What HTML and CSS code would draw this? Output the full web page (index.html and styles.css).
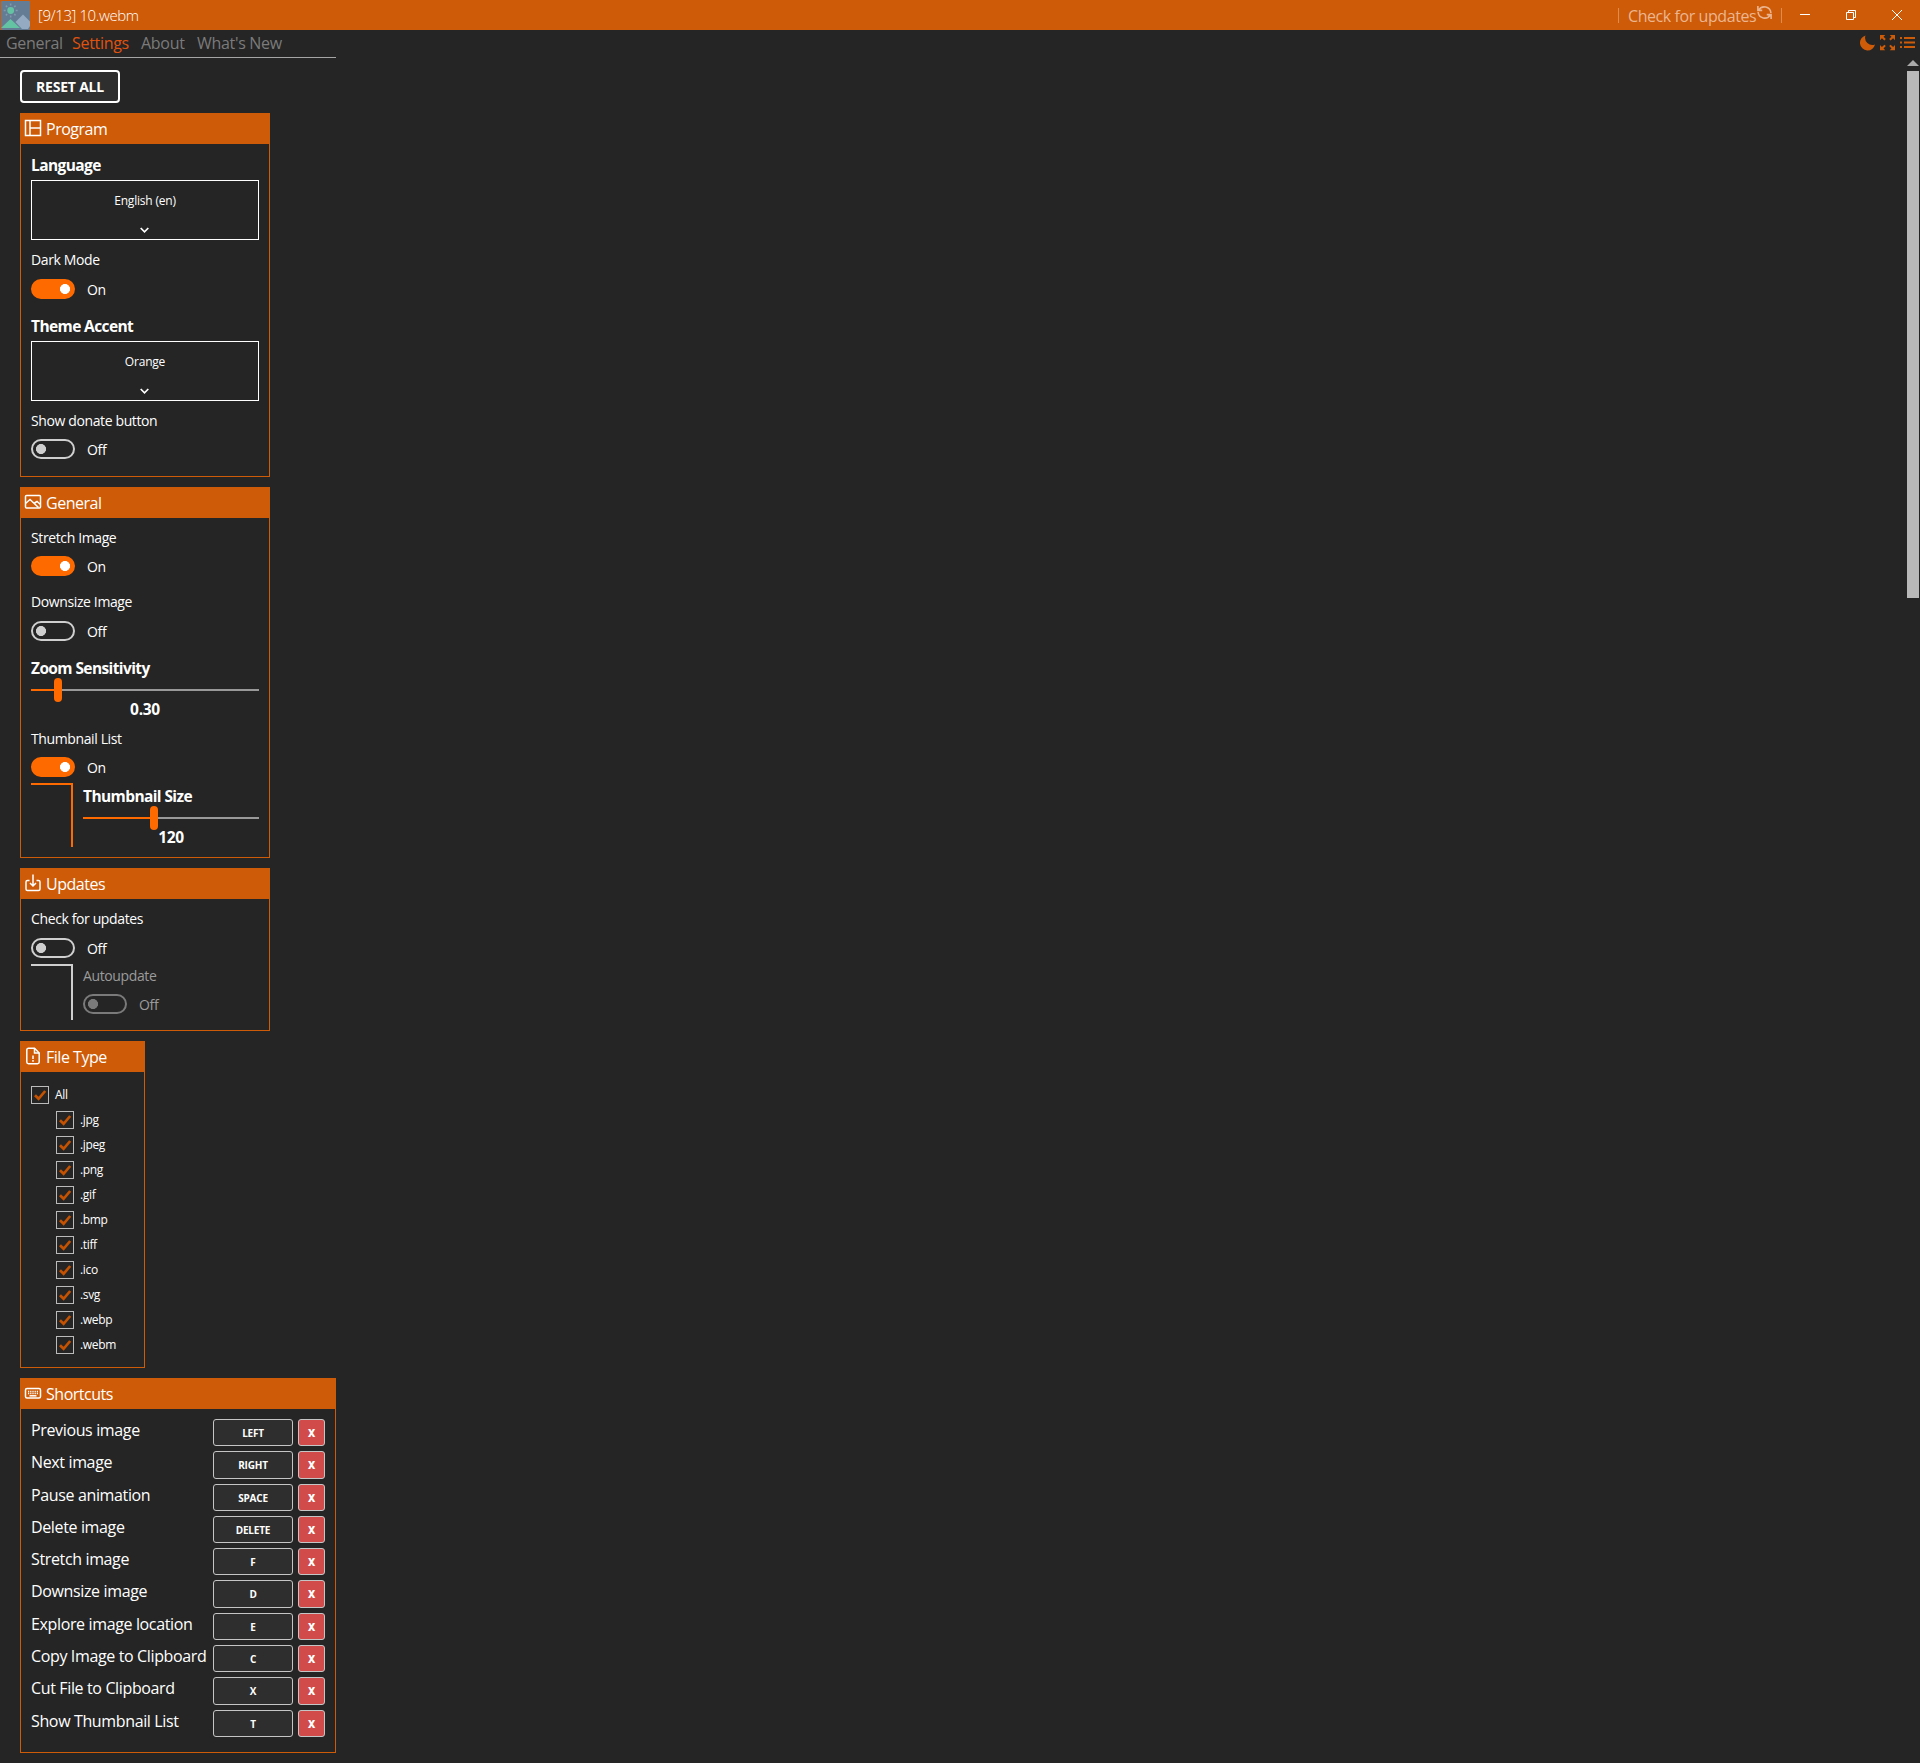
FILE: index.html
```html
<!DOCTYPE html>
<html lang="en">
<head>
<meta charset="utf-8">
<title>[9/13] 10.webm</title>
<link rel="stylesheet" href="styles.css">
</head>
<body>
<svg class="defs" width="0" height="0">
  <symbol id="chev" viewBox="0 0 10 8"><path d="M.7 2 4.500 5.800 8.300 2" fill="none" stroke="#fff" stroke-width="1.700"/></symbol>
  <symbol id="check" viewBox="0 0 16 16"><path d="M3 8.200 6.600 11.800 13.200 4" fill="none" stroke="#c55200" stroke-width="2.700"/></symbol>
</svg>
<header class="titlebar">
  <svg class="logo" viewBox="0 0 29 29"><rect width="29" height="29" rx="1" fill="#647d94"/><path d="M0 27 9.500 18 19 27Z" fill="#63c3a3"/><path d="m14.500 21 7.500-7.500 7 7V25l-2 3h-6Z" fill="#93aac2"/><circle cx="9.700" cy="9.500" r="3.400" fill="#63c3a3"/><g stroke="#8299ae" stroke-width="1.500"><path d="M9.700 2.500v2M9.700 14.500v2M2.700 9.500h2M14.700 9.500h2M4.800 4.600 6.200 6M13.200 13l1.400 1.400M4.800 14.400 6.200 13M13.200 6l1.400-1.400"/></g></svg>
  <span class="title">[9/13] 10.webm</span>
  <div class="update"><span class="update-text">Check for updates</span>
    <svg class="sync" viewBox="0 0 18 18" fill="none" stroke="currentColor" stroke-width="1.700"><path d="M2.700 6.700A7 7 0 0 1 15.800 9.500M15.300 11.300A7 7 0 0 1 2.200 8.500M2 2.200v4.600h4.600M16 15.800v-4.600h-4.600"/></svg>
  </div>
  <svg class="winbtns" viewBox="0 0 120 30" fill="none" stroke="#fff" stroke-width="1"><path d="M15 14.500h10M61.500 12.500h7v7h-7zM63.500 12.500v-2h7v7h-2M107 10l10 10M117 10l-10 10"/></svg>
</header>
<div class="toolbar">
  <nav class="tabs"><span class="tab t1">General</span><span class="tab t2 active">Settings</span><span class="tab t3">About</span><span class="tab t4">What's New</span></nav>
  <svg class="tools" viewBox="0 0 56 16">
    <g fill="#ce5b08"><path d="M5.500.5A7.600 7.600 0 1 0 15 9.500 7.200 7.200 0 0 1 5.500.5Z"/><path d="M20 0h5.300L23.500 1.800l2.300 2.300-1.400 1.400-2.500-2.300L20 5.200ZM35 0v5.200l-1.900-2-2.500 2.300-1.400-1.400 2.300-2.300L29.700 0ZM20 15.200V10l1.900 2 2.500-2.300 1.400 1.400-2.300 2.300 1.800 1.800ZM35 15.200V10l-1.900 2-2.500-2.300-1.400 1.400 2.300 2.300-1.800 1.800Z"/><path d="M40 2h2v2h-2zM44 2h11v2H44zM40 6.500h2v2h-2zM44 6.500h11v2H44zM40 11h2v2h-2zM44 11h11v2H44z"/></g>
  </svg>
</div>
<div class="content">
<main class="cards">
  <button class="reset"><span>RESET ALL</span></button>

  <section class="card">
    <h2 class="head"><svg viewBox="0 0 18 18" class="ico"><path d="M1.500 1.500h15v15h-15zM6 1.500v15M6 9h10.500"/></svg>Program</h2>
    <div class="body">
      <div class="label strong a12">Language</div>
      <div class="select a4"><span>English (en)</span><svg><use href="#chev"/></svg></div>
      <div class="label a10">Dark Mode</div>
      <div class="switch on a9"><i></i><span>On</span></div>
      <div class="label strong a18">Theme Accent</div>
      <div class="select a4"><span>Orange</span><svg><use href="#chev"/></svg></div>
      <div class="label a10">Show donate button</div>
      <div class="switch a8 end17"><i></i><span>Off</span></div>
    </div>
  </section>

  <section class="card">
    <h2 class="head"><svg viewBox="0 0 18 18" class="ico"><rect x="1.500" y="2.500" width="15" height="12.500" rx="1"/><path d="M1.500 10.500 6 6.500l8.500 8M10.500 10 13 8.500l3.500 3"/></svg>General</h2>
    <div class="body">
      <div class="label a10">Stretch Image</div>
      <div class="switch on a8"><i></i><span>On</span></div>
      <div class="label a16">Downsize Image</div>
      <div class="switch a9"><i></i><span>Off</span></div>
      <div class="label strong a18">Zoom Sensitivity</div>
      <div class="slider zoom"><i></i></div>
      <div class="value">0.30</div>
      <div class="label a10">Thumbnail List</div>
      <div class="switch on a8"><i></i><span>On</span></div>
      <div class="nested lit a6">
        <div class="sub">
          <div class="label strong a4">Thumbnail Size</div>
          <div class="slider size"><i></i></div>
          <div class="value">120</div>
        </div>
      </div>
    </div>
  </section>

  <section class="card">
    <h2 class="head"><svg viewBox="0 0 18 18" class="ico"><path d="M5.500 6.500H3.500a1.500 1.500 0 0 0-1.500 1.500v7A1.500 1.500 0 0 0 3.500 16.500h11a1.500 1.500 0 0 0 1.500-1.500V8a1.500 1.500 0 0 0-1.500-1.500h-2M9 .5v11M6 9l3 3 3-3"/></svg>Updates</h2>
    <div class="body">
      <div class="label a10">Check for updates</div>
      <div class="switch a9"><i></i><span>Off</span></div>
      <div class="nested short a6">
        <div class="sub dim">
          <div class="label a2">Autoupdate</div>
          <div class="switch a8"><i></i><span>Off</span></div>
        </div>
      </div>
    </div>
  </section>

  <section class="card files">
    <h2 class="head"><svg viewBox="0 0 18 18" class="ico"><path d="M10.500 1.200h-6A1.700 1.700 0 0 0 2.800 3v12a1.700 1.700 0 0 0 1.700 1.700h9A1.700 1.700 0 0 0 15.200 15V6Z"/><path d="M10.500 1.200V6h4.700M9 8.500v3.500M9 13v1.700"/></svg>File Type</h2>
    <div class="body">
      <div class="tick all"><svg><use href="#check"/></svg>All</div>
      <div class="tick"><svg><use href="#check"/></svg>.jpg</div>
      <div class="tick"><svg><use href="#check"/></svg>.jpeg</div>
      <div class="tick"><svg><use href="#check"/></svg>.png</div>
      <div class="tick"><svg><use href="#check"/></svg>.gif</div>
      <div class="tick"><svg><use href="#check"/></svg>.bmp</div>
      <div class="tick"><svg><use href="#check"/></svg>.tiff</div>
      <div class="tick"><svg><use href="#check"/></svg>.ico</div>
      <div class="tick"><svg><use href="#check"/></svg>.svg</div>
      <div class="tick"><svg><use href="#check"/></svg>.webp</div>
      <div class="tick"><svg><use href="#check"/></svg>.webm</div>
    </div>
  </section>

  <section class="card keys">
    <h2 class="head"><svg viewBox="0 0 18 18" class="ico"><rect x="1.500" y="4.500" width="15" height="9.500" rx="1.500"/><path d="M4 7.400h10M4 9.500h10" stroke-dasharray="1.200 1"/><path d="M5.500 11.800h7"/></svg>Shortcuts</h2>
    <div class="body">
      <div class="key"><span>Previous image</span><b>LEFT</b><b class="x">X</b></div>
      <div class="key"><span>Next image</span><b>RIGHT</b><b class="x">X</b></div>
      <div class="key"><span>Pause animation</span><b>SPACE</b><b class="x">X</b></div>
      <div class="key"><span>Delete image</span><b>DELETE</b><b class="x">X</b></div>
      <div class="key"><span>Stretch image</span><b>F</b><b class="x">X</b></div>
      <div class="key"><span>Downsize image</span><b>D</b><b class="x">X</b></div>
      <div class="key"><span>Explore image location</span><b>E</b><b class="x">X</b></div>
      <div class="key"><span>Copy Image to Clipboard</span><b>C</b><b class="x">X</b></div>
      <div class="key"><span>Cut File to Clipboard</span><b>X</b><b class="x">X</b></div>
      <div class="key"><span>Show Thumbnail List</span><b>T</b><b class="x">X</b></div>
    </div>
  </section>
</main>
<div class="scroll"><i class="up"></i><i class="thumb"></i></div>
</div>
</body>
</html>
```
FILE: styles.css
```css
*, ::before { box-sizing: border-box; }
body { margin: 0; height: 1763px; overflow: hidden; background: #252525; color: #fff; font: 14px "Open Sans", "Noto Sans", sans-serif; white-space: nowrap; }
.defs { display: block; position: absolute; }
.titlebar { display: flex; height: 30px; background: #ce5b08; }
.logo { width: 29px; height: 29px; margin: 1px 8px 0 1px; }
.title { line-height: 31px; font-size: 15px; font-weight: 300; letter-spacing: -.4px; }
.update { display: flex; margin: 8px 0 0 auto; height: 15px; width: 164px; padding-left: 9px; border: solid rgba(255,255,255,.3); border-width: 0 1px; color: #ebb58f; }
.update-text { width: 128px; line-height: 17px; font-size: 16px; letter-spacing: -.42px; }
.sync { width: 17px; height: 17px; margin-top: -4px; flex: none; }
.winbtns { width: 120px; height: 30px; margin: 0 15px 0 3px; }
.toolbar { display: flex; justify-content: space-between; height: 28px; }
.tabs { display: flex; width: 336px; height: 28px; padding-left: 6px; border-bottom: 1px solid #a5a5a5; }
.tab { color: #7b7b7b; font-size: 16px; line-height: 27px; letter-spacing: -.3px; }
.t1 { width: 66px; } .t2 { width: 69px; } .t3 { width: 56px; }
.tab.active { color: #e0530f; }
.tools { width: 56px; height: 16px; margin: 5px 4px 0 0; }
.content { display: flex; justify-content: space-between; }
.cards { display: flex; flex-direction: column; align-items: flex-start; gap: 10px; padding: 12px 0 0 20px; }
.reset { width: 100px; height: 33px; padding: 1px 0 0; border: 2px solid #fff; border-radius: 4px; background: #2e2e2e; color: #fff; font: bold 14px/28px "Open Sans", sans-serif; letter-spacing: -.2px; }
.card { width: 250px; border: 1px solid #ce5b08; border-top: 0; }
.head { display: flex; align-items: center; height: 31px; margin: 0 -1px; padding: 2px 0 0 4px; background: #ce5b08; font-size: 16px; font-weight: 400; letter-spacing: -.48px; line-height: 33px; }
.ico { width: 18px; height: 18px; margin: -3px 4px 0 0; fill: none; stroke: #fff; stroke-width: 1.500; }
.body { display: flow-root; padding: 0 10px; }
.label { height: 20px; line-height: 20px; font-size: 14px; letter-spacing: -.38px; }
.strong { font-size: 15.500px; line-height: 19px; font-weight: 700; letter-spacing: -.6px; }
.select { display: flex; flex-direction: column; align-items: center; height: 60px; border: 1px solid #fff; font-size: 12px; letter-spacing: -.2px; }
.select span { margin-top: 10px; line-height: 20px; }
.select svg { width: 10px; height: 8px; margin-top: 15px; }
.switch { display: flex; height: 20px; align-items: center; line-height: 21px; letter-spacing: -.3px; }
.switch i { width: 44px; height: 20px; margin-right: 12px; border: 2px solid #cfcfcf; border-radius: 10px; background: radial-gradient(circle at 8px 8px, #cfcfcf 4.700px, transparent 5.300px); }
.switch.on i { border-color: #ff6a00; background: radial-gradient(circle at 32px 8px, #fff 4.700px, #ff6a00 5.300px); }
.slider { display: flex; align-items: center; height: 24px; margin-top: -1px; }
.slider i { width: 8px; height: 24px; border-radius: 4px; background: #ff6a00; }
.zoom { background: linear-gradient(90deg, #ff6a00 25px, #999 25px) 0 11px / 100% 2px no-repeat; padding-left: 23px; }
.size { background: linear-gradient(90deg, #ff6a00 70px, #999 70px) 0 11px / 100% 2px no-repeat; padding-left: 67px; }
.value { height: 17px; line-height: 14px; text-align: center; font-size: 15.500px; font-weight: 700; letter-spacing: -.3px; }
.nested { width: 228px; height: 64px; margin-bottom: 10px; display: flex; }
.nested::before { content: ""; width: 42px; flex: none; border: solid #cfcfcf; border-width: 2px 2px 0 0; }
.nested.lit::before { border-color: #ff6a00; }
.nested.short { height: 56px; }
.sub { display: flow-root; flex: 1; margin-left: 10px; }
.dim { color: #9b9b9b; }
.dim .switch i { border-color: #7a7a7a; background: radial-gradient(circle at 8px 8px, #7a7a7a 4.700px, transparent 5.300px); }
.a2 { margin-top: 2px; } .a4 { margin-top: 4px; } .a6 { margin-top: 6px; } .a8 { margin-top: 8px; } .a9 { margin-top: 9px; }
.a10 { margin-top: 10px; } .a12 { margin-top: 12px; } .a16 { margin-top: 16px; } .a18 { margin-top: 18px; }
.end17 { margin-bottom: 17px; }
.files { width: 125px; }
.files .body { padding: 14px 10px 13px; }
.tick { display: flex; height: 18px; margin: 0 0 7px 25px; line-height: 18px; font-size: 12px; letter-spacing: -.35px; }
.tick.all { margin-left: 0; }
.tick:last-child { margin-bottom: 0; }
.tick svg { width: 18px; height: 18px; margin-right: 6px; border: 1px solid #bbb; flex: none; }
.keys { width: 316px; }
.keys .body { padding: 10px 10px 15px; }
.key { display: flex; height: 27.300px; margin-bottom: 5px; }
.key:last-child { margin-bottom: 0; }
.key span { width: 182px; font-size: 16px; line-height: 23.600px; letter-spacing: -.36px; }
.key b { width: 80px; border: 1px solid #c5c5c5; border-radius: 3px; background: #2e2e2e; text-align: center; font-size: 10px; line-height: 27px; letter-spacing: -.2px; }
.key .x { width: 27px; margin-left: 5px; background: #d24b4b; font-weight: 800; }
.scroll { display: flex; flex-direction: column; align-items: center; width: 12px; margin-right: 1px; gap: 5px; padding-top: 2px; }
.up { border: solid transparent; border-width: 0 6px 6px; border-bottom-color: #aaa; }
.thumb { width: 12px; height: 527px; background: #b9b9b9; }
```
